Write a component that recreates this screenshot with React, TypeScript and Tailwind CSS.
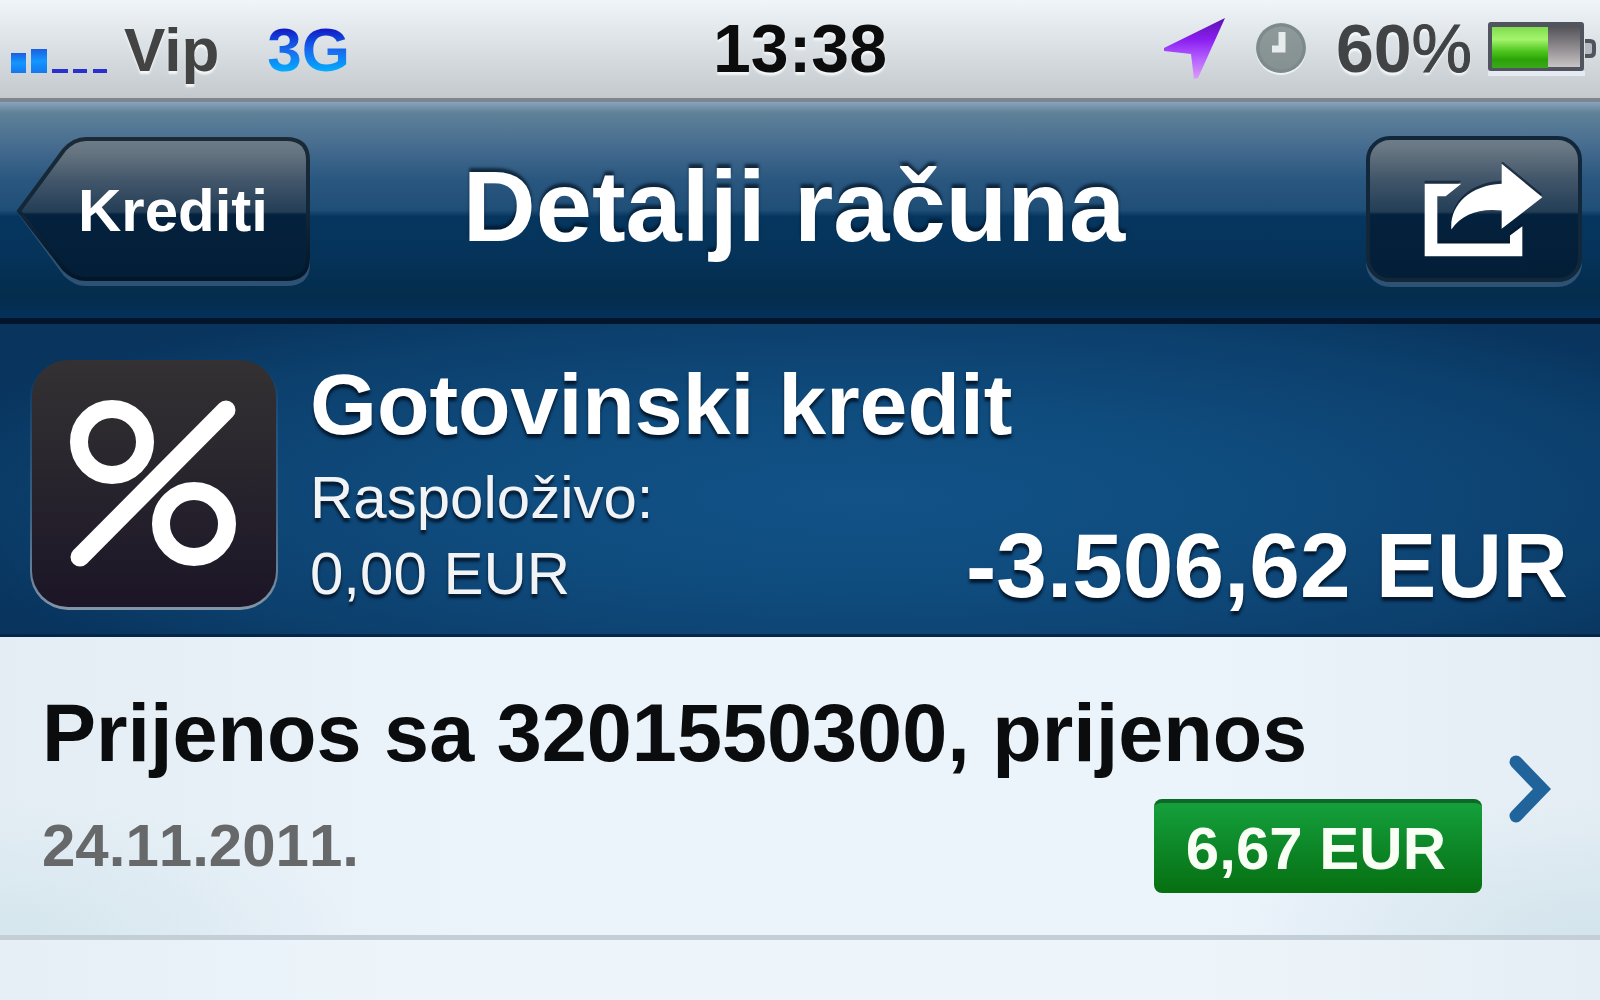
import React from "react";

function SignalIcon() {
  return (
    <svg width="98" height="26" viewBox="0 0 98 26" aria-label="Signal">
      <defs>
        <linearGradient id="signal" x1="0" y1="0" x2="0" y2="1">
          <stop offset="0" stopColor="#1b5fe0" />
          <stop offset="0.5" stopColor="#1496ff" />
          <stop offset="1" stopColor="#1477ee" />
        </linearGradient>
      </defs>
      <rect x="1" y="5" width="15" height="20" fill="url(#signal)" />
      <rect x="21" y="1" width="16" height="24" fill="url(#signal)" />
      <path d="M42 23h16M63 23h14M83 23h14" stroke="#2a30d0" strokeWidth="4" />
    </svg>
  );
}

function LocationIcon() {
  return (
    <svg width="62" height="62" viewBox="0 0 62 62" aria-label="Location">
      <defs>
        <linearGradient id="loc" x1="0" y1="0" x2="0" y2="1">
          <stop offset="0" stopColor="#5a12b0" />
          <stop offset="0.35" stopColor="#8a1ef0" />
          <stop offset="0.65" stopColor="#b25cff" />
          <stop offset="1" stopColor="#dc9cf6" />
        </linearGradient>
      </defs>
      <path d="M61 0 L0 30 L0 33 L27 36 L30 61 L34 60 Z" fill="url(#loc)" />
    </svg>
  );
}

function ClockIcon() {
  return (
    <svg width="54" height="54" viewBox="0 0 54 54" aria-label="Alarm">
      <defs>
        <linearGradient id="clock" x1="0" y1="0" x2="0" y2="1">
          <stop offset="0" stopColor="#8f9a9b" />
          <stop offset="1" stopColor="#84918f" />
        </linearGradient>
      </defs>
      <circle cx="27" cy="28" r="25" fill="#eef2f4" />
      <circle cx="27" cy="26" r="25" fill="url(#clock)" />
      <circle cx="27" cy="26" r="23" fill="none" stroke="#7d8a8d" strokeWidth="3" />
      <path d="M28 10v17H18" fill="none" stroke="#e6ecec" strokeWidth="7" />
    </svg>
  );
}

function BatteryIcon() {
  return (
    <svg width="108" height="56" viewBox="0 0 108 56" aria-label="Battery">
      <defs>
        <linearGradient id="charge" x1="0" y1="0" x2="0" y2="1">
          <stop offset="0" stopColor="#7fdc4e" />
          <stop offset="0.3" stopColor="#a4f46c" />
          <stop offset="0.6" stopColor="#4cc41c" />
          <stop offset="0.8" stopColor="#2ba206" />
          <stop offset="1" stopColor="#3aa81c" />
        </linearGradient>
        <linearGradient id="empty" x1="0" y1="0" x2="0" y2="1">
          <stop offset="0" stopColor="#4c4c52" />
          <stop offset="0.5" stopColor="#8c888c" />
          <stop offset="1" stopColor="#cfc9ca" />
        </linearGradient>
      </defs>
      <rect x="0" y="49" width="97" height="5" fill="#e6eaf2" />
      <rect x="2" y="2" width="92" height="45" rx="1" fill="url(#empty)" stroke="#50545f" strokeWidth="4" />
      <rect x="4" y="5" width="56" height="41" fill="url(#charge)" />
      <path d="M97 19h5q4 0 4 4v7q0 4-4 4h-5" fill="#b4bcc2" stroke="#50545f" strokeWidth="4" />
    </svg>
  );
}

function StatusBar() {
  return (
    <header className="grid grid-cols-[1fr_auto_1fr] items-start border-b-4 border-[#7d858e] bg-linear-to-b from-[#eff5f9] via-[#d9dfe3] via-50% to-[#c3c9cc] font-bold leading-[68px] [text-shadow:0_3px_2px_#f2f6f8]">
      <div className="flex items-start pl-2.5 pt-4 pb-3.5 text-[62px] text-[#434343]">
        <div className="pt-8">
          <SignalIcon />
        </div>
        <span className="ml-4">Vip</span>
        <span className="ml-12 bg-linear-to-b from-[#1418c8] from-20% via-[#1a68ee] via-50% to-[#06b4ff] to-85% bg-clip-text text-transparent [text-shadow:none]">
          3G
        </span>
      </div>
      <time className="pt-3.5 text-[68px] text-[#0c0c0c]">13:38</time>
      <div className="flex items-start justify-end pr-1 pt-3.5 text-[68px] text-[#414345]">
        <div className="mr-7 pt-1">
          <LocationIcon />
        </div>
        <div className="mr-7 pt-2">
          <ClockIcon />
        </div>
        <span className="mr-4">
          60<span className="font-normal [-webkit-text-stroke:1px_#414345]">%</span>
        </span>
        <div className="pt-2">
          <BatteryIcon />
        </div>
      </div>
    </header>
  );
}

function BackButton() {
  return (
    <button type="button" className="relative h-[152px] w-[296px] pb-0.5 pl-4.5 text-center">
      <svg className="absolute inset-0" width="296" height="152" viewBox="0 0 296 152" aria-hidden="true">
        <defs>
          <linearGradient id="back" x1="0" y1="0" x2="0" y2="1">
            <stop offset="0" stopColor="#6d7d89" />
            <stop offset="0.1" stopColor="#657480" />
            <stop offset="0.3" stopColor="#42566a" />
            <stop offset="0.52" stopColor="#233e56" />
            <stop offset="0.54" stopColor="#04213d" />
            <stop offset="1" stopColor="#031e37" />
          </linearGradient>
          <linearGradient id="backEdge" x1="0" y1="0" x2="0" y2="1">
            <stop offset="0" stopColor="#1b2a36" />
            <stop offset="0.5" stopColor="#12273a" />
            <stop offset="1" stopColor="#031629" />
          </linearGradient>
        </defs>
        <path
          d="M3 79 L48 17 Q58 6 70 6 H270 Q294 6 294 28 V128 Q294 150 270 150 H70 Q58 150 48 140 Z"
          fill="#2d5273"
        />
        <path
          d="M3 75 L48 14 Q58 3 70 3 H270 Q292 3 292 24 V122 Q292 143 270 143 H70 Q58 143 48 133 Z"
          fill="url(#back)"
          stroke="url(#backEdge)"
          strokeWidth="4"
        />
      </svg>
      <span className="relative text-[60px] leading-[68px] font-bold">Krediti</span>
    </button>
  );
}

function ShareButton() {
  return (
    <button
      type="button"
      aria-label="Share"
      className="mb-2 flex h-[146px] w-[216px] items-start justify-center rounded-[24px] border-4 border-[#12273a] bg-[linear-gradient(180deg,#6d7d89_0%,#657480_8%,#42566a_28%,#233e56_52%,#04213d_54%,#031e37_100%)] pl-5 pt-5.5 shadow-[0_5px_0_#2d5273]"
    >
      <svg width="120" height="97" viewBox="285 180 360 290" aria-hidden="true">
        <g fill="#04162a" opacity="0.6" transform="translate(0 -9)">
          <path d="M287 245H397L350 282H325V424H543V400L580 372V462H287Z" />
          <path d="M518 185L640 285L518 380V325C450 318 400 335 367 382C362 310 420 250 518 245Z" />
        </g>
        <g fill="#fff">
          <path d="M287 245H397L350 282H325V424H543V400L580 372V462H287Z" />
          <path d="M518 185L640 285L518 380V325C450 318 400 335 367 382C362 310 420 250 518 245Z" />
        </g>
      </svg>
    </button>
  );
}

function NavBar() {
  return (
    <nav className="grid grid-cols-[1fr_auto_1fr] items-start border-b-6 border-[#02152b] bg-[linear-gradient(180deg,#8ba3bd_0%,#5f8299_5%,#456b8f_21%,#2a577f_36%,#1f4e77_50%,#06365f_53%,#05335a_70%,#042c4c_90%,#04305a_100%)] pr-4.5 pl-4 pt-8.5 text-white [text-shadow:0_-4px_3px_rgba(2,18,36,0.7)]">
      <BackButton />
      <h1 className="pt-3 pr-2.5 text-[101px] leading-[116px] font-bold">Detalji računa</h1>
      <div className="flex justify-end pb-7">
        <ShareButton />
      </div>
    </nav>
  );
}

function PercentIcon() {
  return (
    <svg className="shrink-0" width="248" height="250" viewBox="0 0 248 250" aria-hidden="true">
      <defs>
        <linearGradient id="tile" x1="0" y1="0" x2="0" y2="1">
          <stop offset="0" stopColor="#333133" />
          <stop offset="0.5" stopColor="#28242d" />
          <stop offset="1" stopColor="#1b1526" />
        </linearGradient>
        <linearGradient id="tileEdge" x1="0" y1="0" x2="0" y2="1">
          <stop offset="0" stopColor="#6b8399" stopOpacity="0" />
          <stop offset="0.6" stopColor="#6b8399" stopOpacity="0.5" />
          <stop offset="1" stopColor="#8496a8" />
        </linearGradient>
      </defs>
      <rect x="0" y="0" width="248" height="250" rx="38" fill="url(#tileEdge)" />
      <rect x="2" y="0" width="244" height="247" rx="36" fill="url(#tile)" />
      <g fill="none" stroke="#fff" strokeWidth="18">
        <circle cx="82" cy="82" r="33" />
        <circle cx="164" cy="164" r="33" />
        <path d="M50 197L196 50" strokeWidth="19" strokeLinecap="round" />
      </g>
    </svg>
  );
}

function AccountSummary() {
  return (
    <section className="flex items-start border-b-3 border-[#04264a] bg-[radial-gradient(ellipse_62%_72%_at_54%_56%,#125287_0%,#0f4c7e_40%,#0c3f6c_80%,#08345e_100%)] pl-7.5 pr-8 pt-9 pb-5.5 text-white [text-shadow:0_4px_3px_rgba(2,16,34,0.85)]">
      <PercentIcon />
      <div className="ml-8 grow">
        <h2 className="text-[86px] leading-[88px] font-bold">Gotovinski kredit</h2>
        <div className="flex items-end justify-between">
          <dl className="mt-3 text-[60px] leading-[76px] text-[#f1f3f5]">
            <dt>Raspoloživo:</dt>
            <dd>0,00 EUR</dd>
          </dl>
          <p className="text-[91px] leading-[92px] font-bold">-3.506,62 EUR</p>
        </div>
      </div>
    </section>
  );
}

function Transaction() {
  return (
    <li className="border-b-5 border-[#c3ced6] bg-[radial-gradient(ellipse_22%_45%_at_0%_100%,#d5e6ed_0%,transparent_100%),radial-gradient(ellipse_22%_45%_at_100%_100%,#d3e4ec_0%,transparent_100%),linear-gradient(90deg,#e4edf4_0%,#ebf3fb_30%,#ebf3fb_75%,#e4edf4_100%)]">
      <a href="#prijenos" className="flex items-center pl-10.5 pr-12 pt-12 pb-10.5">
        <div className="grow">
          <h3 className="text-[81px] leading-[96px] font-bold text-[#0b0c0e]">Prijenos sa 3201550300, prijenos</h3>
          <div className="flex items-center justify-between pt-4.5">
            <time className="text-[60px] leading-[68px] font-bold text-[#666869] [font-kerning:none]">24.11.2011.</time>
            <strong className="rounded-lg border-t-4 border-[#0d6a26] bg-linear-to-b from-[#15a03c] to-[#066f10] pr-9 pl-8 pt-3 pb-2.5 text-[60px] leading-[68px] text-[#fafff5]">
              6,67 EUR
            </strong>
          </div>
        </div>
        <svg className="ml-6.5 shrink-0" width="44" height="68" viewBox="0 0 44 68" aria-hidden="true">
          <path d="M8 7L34 34L8 61" fill="none" stroke="#21649b" strokeWidth="13" strokeLinecap="round" />
        </svg>
      </a>
    </li>
  );
}

export default function App() {
  return (
    <div className="flex min-h-screen flex-col bg-[#ebf3fa] font-['Liberation_Sans',Arial,sans-serif] whitespace-nowrap">
      <StatusBar />
      <NavBar />
      <main className="grow bg-[linear-gradient(90deg,#e6eff6_0%,#edf5fb_25%,#edf5fb_75%,#e6eef5_100%)]">
        <AccountSummary />
        <ul>
          <Transaction />
        </ul>
      </main>
    </div>
  );
}
